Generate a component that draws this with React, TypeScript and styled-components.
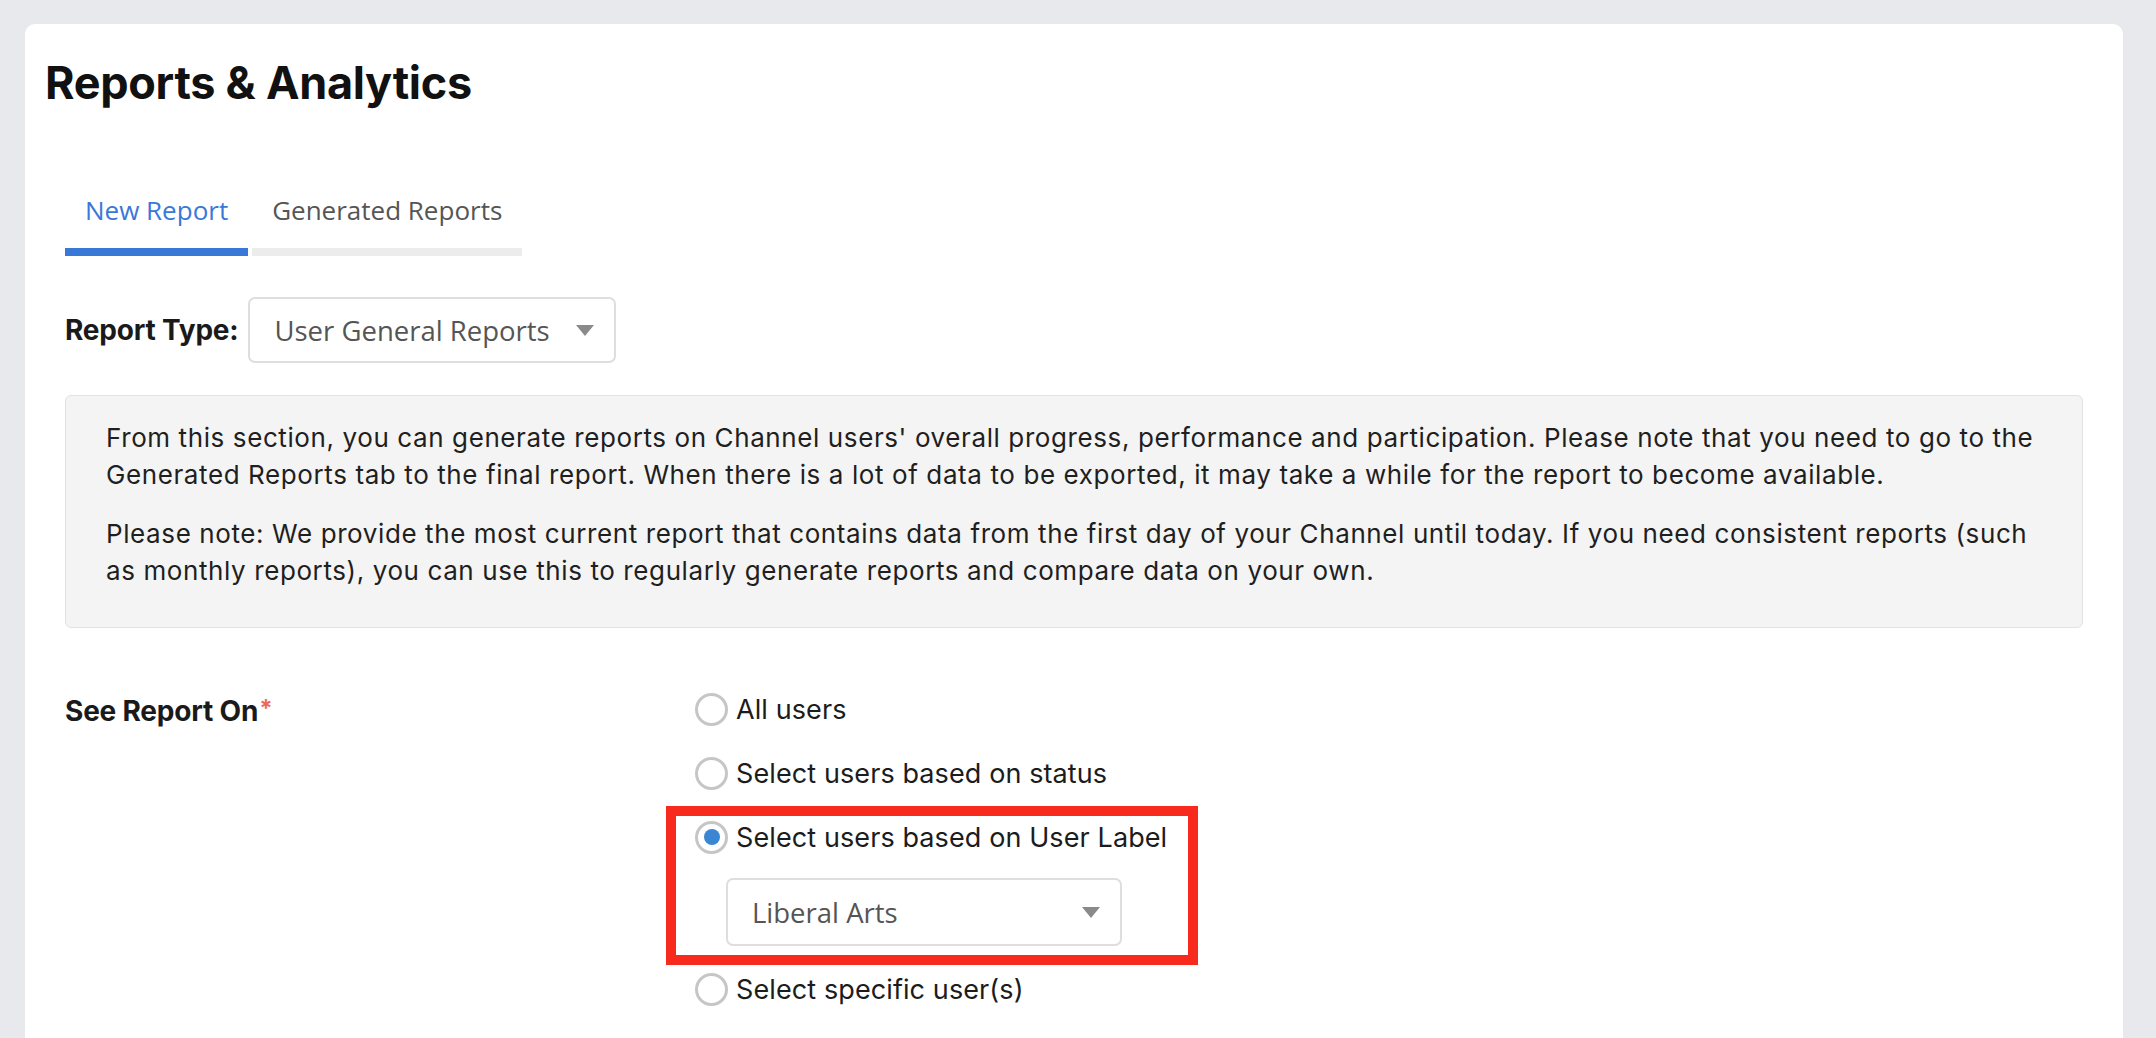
import React from "react";
import styled, { createGlobalStyle } from "styled-components";

const Global = createGlobalStyle`
  html, body { margin: 0; padding: 0; height: 100%; overflow: hidden; }
  body { background: #e8e9ed; font-family: Inter, "Liberation Sans", sans-serif; }
  *, *::before, *::after { box-sizing: border-box; }
`;

const Page = styled.div`
  min-height: 100vh;
  padding: 24px 33px 0 25px;
  display: flex;
  flex-direction: column;
`;

const Card = styled.main`
  flex: 1;
  background: #ffffff;
  border-radius: 10px 10px 0 0;
  padding: 33px 20px 40px 20px;
`;

const Title = styled.h1`
  margin: 0;
  font-family: Inter, "Liberation Sans", sans-serif;
  font-weight: 700;
  font-size: 45px;
  line-height: 52px;
  letter-spacing: -0.3px;
  color: #111111;
`;

const Body = styled.section`
  padding: 0 20px;
`;

const Tabs = styled.nav`
  display: flex;
  gap: 4px;
  margin-top: 84px;
`;

const Tab = styled.button<{ $active?: boolean }>`
  appearance: none;
  background: none;
  border: none;
  border-bottom: 8px solid ${(p) => (p.$active ? "#3a78d8" : "#ececec")};
  padding: 0 20px 21px 20px;
  font-family: "Open Sans", "Liberation Sans", sans-serif;
  font-size: 26px;
  line-height: 34px;
  color: ${(p) => (p.$active ? "#3a78d8" : "#555555")};
  cursor: pointer;
`;

const TypeRow = styled.div`
  display: flex;
  align-items: center;
  gap: 10px;
  margin-top: 41px;
`;

const FieldLabel = styled.label`
  font-family: Inter, "Liberation Sans", sans-serif;
  font-weight: 700;
  font-size: 28px;
  color: #1a1a1a;
  letter-spacing: -0.2px;
`;

const Select = styled.div<{ $w: number; $h: number }>`
  width: ${(p) => p.$w}px;
  height: ${(p) => p.$h}px;
  border: 2px solid #dedede;
  border-radius: 7px;
  background: #ffffff;
  display: flex;
  align-items: center;
  justify-content: space-between;
  padding: 0 20px 0 24px;
  font-family: "Open Sans", "Liberation Sans", sans-serif;
  font-size: 27.5px;
  color: #555555;
`;

const Caret = styled.span`
  width: 0;
  height: 0;
  border-left: 9px solid transparent;
  border-right: 9px solid transparent;
  border-top: 11px solid #8a8a8a;
`;

const InfoBox = styled.div`
  margin-top: 32px;
  background: #f4f4f4;
  border: 1px solid #e2e2e2;
  border-radius: 6px;
  padding: 24px 40px 38px 40px;
  height: 233px;
`;

const InfoText = styled.p`
  margin: 0;
  font-size: 26px;
  line-height: 36.7px;
  letter-spacing: 0.6px;
  color: #1f1f1f;
  & + & { margin-top: 23px; }
`;

const FormRow = styled.div`
  display: grid;
  grid-template-columns: 630px 1fr;
  margin-top: 49px;
`;

const RowLabel = styled.div`
  font-family: Inter, "Liberation Sans", sans-serif;
  font-weight: 700;
  font-size: 28px;
  line-height: 64px;
  color: #1a1a1a;
  letter-spacing: -0.2px;
`;

const Required = styled.span`
  color: #ea6a5d;
  font-size: 24px;
  vertical-align: 4px;
  margin-left: 1px;
`;

const Options = styled.div`
  display: flex;
  flex-direction: column;
`;

const Option = styled.label`
  display: flex;
  align-items: center;
  gap: 8px;
  height: 64px;
  font-size: 27px;
  letter-spacing: 0.1px;
  color: #1c1c1c;
  cursor: pointer;
`;

const Radio = styled.span<{ $checked?: boolean }>`
  width: 33px;
  height: 33px;
  border-radius: 50%;
  border: 3px solid #c6c6c6;
  background: #ffffff;
  display: flex;
  align-items: center;
  justify-content: center;
  flex-shrink: 0;
  &::after {
    content: "";
    width: 16px;
    height: 16px;
    border-radius: 50%;
    background: ${(p) => (p.$checked ? "#3a86d2" : "transparent")};
  }
`;

const Highlight = styled.div`
  position: relative;
  padding-bottom: 11px;
  &::after {
    content: "";
    position: absolute;
    left: -29px;
    top: 1px;
    width: 532px;
    height: 159px;
    border: 10px solid #f8291d;
    pointer-events: none;
  }
`;

const SubSelect = styled.div`
  margin: 9px 0 0 31px;
`;

export default function App() {
  return (
    <>
      <Global />
      <Page>
        <Card>
          <Title>Reports &amp; Analytics</Title>
          <Body>
            <Tabs>
              <Tab $active>New Report</Tab>
              <Tab>Generated Reports</Tab>
            </Tabs>
            <TypeRow>
              <FieldLabel>Report Type:</FieldLabel>
              <Select $w={368} $h={66}>
                <span>User General Reports</span>
                <Caret />
              </Select>
            </TypeRow>
            <InfoBox>
              <InfoText>
                From this section, you can generate reports on Channel users' overall progress, performance and
                participation. Please note that you need to go to the Generated Reports tab to the final report. When
                there is a lot of data to be exported, it may take a while for the report to become available.
              </InfoText>
              <InfoText>
                Please note: We provide the most current report that contains data from the first day of your Channel
                until today. If you need consistent reports (such as monthly reports), you can use this to regularly
                generate reports and compare data on your own.
              </InfoText>
            </InfoBox>
            <FormRow>
              <RowLabel>
                See Report On<Required>*</Required>
              </RowLabel>
              <Options>
                <Option>
                  <Radio />
                  All users
                </Option>
                <Option>
                  <Radio />
                  Select users based on status
                </Option>
                <Highlight>
                  <Option>
                    <Radio $checked />
                    Select users based on User Label
                  </Option>
                  <SubSelect>
                    <Select $w={396} $h={68}>
                      <span>Liberal Arts</span>
                      <Caret />
                    </Select>
                  </SubSelect>
                </Highlight>
                <Option>
                  <Radio />
                  Select specific user(s)
                </Option>
              </Options>
            </FormRow>
          </Body>
        </Card>
      </Page>
    </>
  );
}
